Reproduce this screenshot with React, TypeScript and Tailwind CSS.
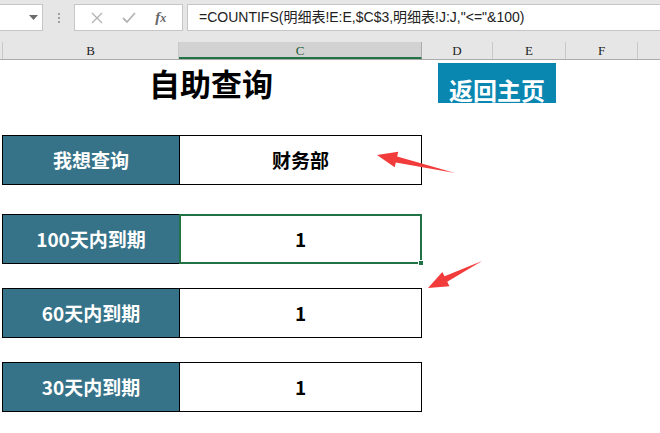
import React from 'react';

const cjk = { fontFamily: '"Noto Sans CJK SC", "Noto Sans", sans-serif' };

const rows = [
  { label: '我想查询', value: '财务部', gap: 'mt-[32px]', active: false },
  { label: '100天内到期', value: '1', gap: 'mt-[29px]', active: true },
  { label: '60天内到期', value: '1', gap: 'mt-[24px]', active: false },
  { label: '30天内到期', value: '1', gap: 'mt-[24px]', active: false },
];

const Arrow = ({ x1, y1, x2, y2 }: { x1: number; y1: number; x2: number; y2: number }) => {
  // x1,y1 = tail ; x2,y2 = tip
  const dx = x2 - x1;
  const dy = y2 - y1;
  const len = Math.hypot(dx, dy);
  const ux = dx / len;
  const uy = dy / len;
  const px = -uy;
  const py = ux;
  const head = 20;
  const bx = x2 - ux * head;
  const by = y2 - uy * head;
  const pts = [
    [x1, y1],
    [bx + px * 3, by + py * 3],
    [bx + px * 8, by + py * 8],
    [x2, y2],
    [bx - px * 8, by - py * 8],
    [bx - px * 3, by - py * 3],
  ]
    .map((p) => p.join(','))
    .join(' ');
  return <polygon points={pts} fill="#f23b3b" />;
};

export default function App() {
  return (
    <div className="relative w-[660px] h-[433px] overflow-hidden bg-white">
      {/* formula bar */}
      <div className="h-[42px] bg-[#e6e6e6] flex items-start pt-[4px]">
        <div className="w-[43px] h-[27px] bg-white border border-[#c6c6c6] border-l-0 flex items-center justify-end pr-[4px]">
          <svg width="9" height="6" viewBox="0 0 9 6">
            <path d="M0 0 L9 0 L4.5 5 Z" fill="#6b6b6b" />
          </svg>
        </div>
        <div className="w-[31px] flex flex-col items-center gap-[2px] pt-[9px]">
          <div className="w-[2px] h-[2px] bg-[#a0a0a0]" />
          <div className="w-[2px] h-[2px] bg-[#a0a0a0]" />
          <div className="w-[2px] h-[2px] bg-[#a0a0a0]" />
        </div>
        <div className="w-[109px] h-[27px] bg-white border border-[#c6c6c6] flex items-center justify-around px-[6px]">
          <svg width="12" height="12" viewBox="0 0 12 12">
            <path d="M1 1 L11 11 M11 1 L1 11" stroke="#b4b4b4" strokeWidth="1.4" />
          </svg>
          <svg width="14" height="12" viewBox="0 0 14 12">
            <path d="M1 6 L5 10 L13 1" stroke="#b4b4b4" strokeWidth="1.8" fill="none" />
          </svg>
          <span
            className="text-[15px] italic font-bold text-[#666] leading-none"
            style={{ fontFamily: '"Liberation Serif", serif' }}
          >
            f<span className="text-[12px]">x</span>
          </span>
        </div>
        <div
          className="ml-[4px] flex-1 h-[27px] bg-white border border-[#c6c6c6] border-r-0 flex items-center pl-[11px] text-[14px] text-[#222]"
          style={{ fontFamily: '"Liberation Sans", "Noto Sans CJK SC", sans-serif' }}
        >
          =COUNTIFS(明细表!E:E,$C$3,明细表!J:J,"&lt;="&amp;100)
        </div>
      </div>

      {/* column headers */}
      <div
        className="h-[18px] bg-[#e6e6e6] border-b border-[#ababab] flex text-[13px] text-[#222] leading-[17px]"
        style={{ fontFamily: '"Liberation Serif", "DejaVu Serif", serif' }}
      >
        <div className="w-[3px] border-r border-[#c8c8c8]" />
        <div className="w-[176px] text-center border-r border-[#c8c8c8]">B</div>
        <div className="w-[243px] text-center bg-[#d2d2d2] text-[#1f5c3a] border-b-2 border-[#217346] border-r border-r-[#ababab]">C</div>
        <div className="w-[71px] text-center border-r border-[#c8c8c8]">D</div>
        <div className="w-[73px] text-center border-r border-[#c8c8c8]">E</div>
        <div className="w-[72px] text-center border-r border-[#c8c8c8]">F</div>
      </div>

      {/* sheet body */}
      <div className="pt-[3px]">
        <div className="flex items-start">
          <div
            className="w-[422px] h-[40px] flex items-center justify-center text-[31px] font-bold text-black"
            style={cjk}
          >
            自助查询
          </div>
          <div
            className="ml-[16px] w-[118px] h-[40px] bg-[#0a87b0] flex items-end justify-center text-[24px] font-bold text-white leading-none"
            style={cjk}
          >
            <span className="mb-[1px]">返回主页</span>
          </div>
        </div>

        <div className="ml-[2px] w-[420px]">
          {rows.map((r) => (
            <div key={r.label} className={`${r.gap} flex h-[50px]`}>
              <div
                className="w-[178px] bg-[#367388] border border-black flex items-center justify-center text-[19px] font-bold text-white"
                style={cjk}
              >
                {r.label}
              </div>
              {r.active ? (
                <div className="relative w-[243px] -ml-[1px] border-2 border-[#217346] flex items-center justify-center text-[19px] font-bold text-black" style={cjk}>
                  {r.value}
                  <div className="absolute -right-[4px] -bottom-[4px] w-[6px] h-[6px] bg-[#217346] border border-white" />
                </div>
              ) : (
                <div
                  className="w-[242px] border border-l-0 border-black flex items-center justify-center text-[19px] font-bold text-black"
                  style={cjk}
                >
                  {r.value}
                </div>
              )}
            </div>
          ))}
        </div>
      </div>

      {/* annotation arrows */}
      <svg className="absolute left-0 top-0 pointer-events-none" width="660" height="433">
        <Arrow x1={455} y1={173} x2={377} y2={155} />
        <Arrow x1={482} y1={261} x2={428} y2={288} />
      </svg>
    </div>
  );
}
